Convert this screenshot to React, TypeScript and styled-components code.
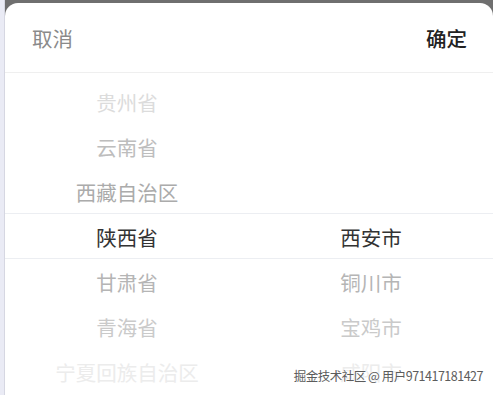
import React from 'react';
import styled, { createGlobalStyle } from 'styled-components';

const GlobalStyle = createGlobalStyle`
  html, body {
    margin: 0;
    padding: 0;
    width: 493px;
    height: 395px;
    overflow: hidden;
    background: #e8e9f3;
    font-family: "Noto Sans CJK SC", "Noto Sans", sans-serif;
  }
`;

const ROW = 45;

const Screen = styled.div`
  display: flex;
  width: 493px;
  height: 395px;
  overflow: hidden;
`;

const SideStrip = styled.div`
  width: 4px;
  flex: none;
  background: #eaebf5;
  border-right: 1px solid #d6d7e2;
`;

const Overlay = styled.div`
  flex: 1;
  display: flex;
  flex-direction: column;
  padding-top: 3px;
  background: #6f6f6f;
`;

const Sheet = styled.div`
  flex: 1;
  display: flex;
  flex-direction: column;
  background: #fff;
  border-radius: 13px 13px 0 0;
  overflow: hidden;
`;

const Toolbar = styled.div`
  height: 69px;
  flex: none;
  display: flex;
  align-items: center;
  justify-content: space-between;
  padding: 0 26px 0 27px;
  border-bottom: 1px solid #efefef;
`;

const ToolButton = styled.span<{ $primary?: boolean }>`
  font-size: 20.5px;
  line-height: 1;
  color: ${({ $primary }) => ($primary ? '#222' : '#8a8a8a')};
  font-weight: ${({ $primary }) => ($primary ? 500 : 400)};
  margin-top: 1px;
`;

const Wheel = styled.div`
  position: relative;
  flex: 1;
  display: grid;
  grid-template-columns: 1fr 1fr;
  padding-top: 6px;
`;

const Column = styled.div`
  display: flex;
  flex-direction: column;
`;

const Option = styled.div<{ $tone: string }>`
  height: ${ROW}px;
  display: flex;
  align-items: center;
  justify-content: center;
  font-size: 20.5px;
  color: ${({ $tone }) => $tone};
`;

const SelectedBand = styled.div`
  position: absolute;
  left: 0;
  right: 0;
  top: ${6 + ROW * 3 - 1}px;
  height: ${ROW - 1}px;
  border-top: 1px solid #eceef2;
  border-bottom: 1px solid #eceef2;
  pointer-events: none;
`;

const Watermark = styled.div`
  position: absolute;
  right: 10px;
  bottom: 10px;
  font-size: 12.5px;
  letter-spacing: -0.5px;
  color: #5c5c5c;
  text-shadow: 0 0 2px #fff, 0 0 2px #fff;
`;

const tones = ['#dcdcdc', '#bdbdbd', '#ababab', '#333', '#b5b5b5', '#cacaca', '#ececec'];

const provinces = ['贵州省', '云南省', '西藏自治区', '陕西省', '甘肃省', '青海省', '宁夏回族自治区'];
const cities = ['', '', '', '西安市', '铜川市', '宝鸡市', '咸阳市'];

const App = () => (
  <>
    <GlobalStyle />
    <Screen>
      <SideStrip />
      <Overlay>
        <Sheet>
          <Toolbar>
            <ToolButton>取消</ToolButton>
            <ToolButton $primary>确定</ToolButton>
          </Toolbar>
          <Wheel>
            <Column>
              {provinces.map((p, i) => (
                <Option key={p} $tone={tones[i]}>{p}</Option>
              ))}
            </Column>
            <Column>
              {cities.map((c, i) => (
                <Option key={i} $tone={tones[i]}>{c}</Option>
              ))}
            </Column>
            <SelectedBand />
            <Watermark>掘金技术社区 @ 用户971417181427</Watermark>
          </Wheel>
        </Sheet>
      </Overlay>
    </Screen>
  </>
);

export default App;
